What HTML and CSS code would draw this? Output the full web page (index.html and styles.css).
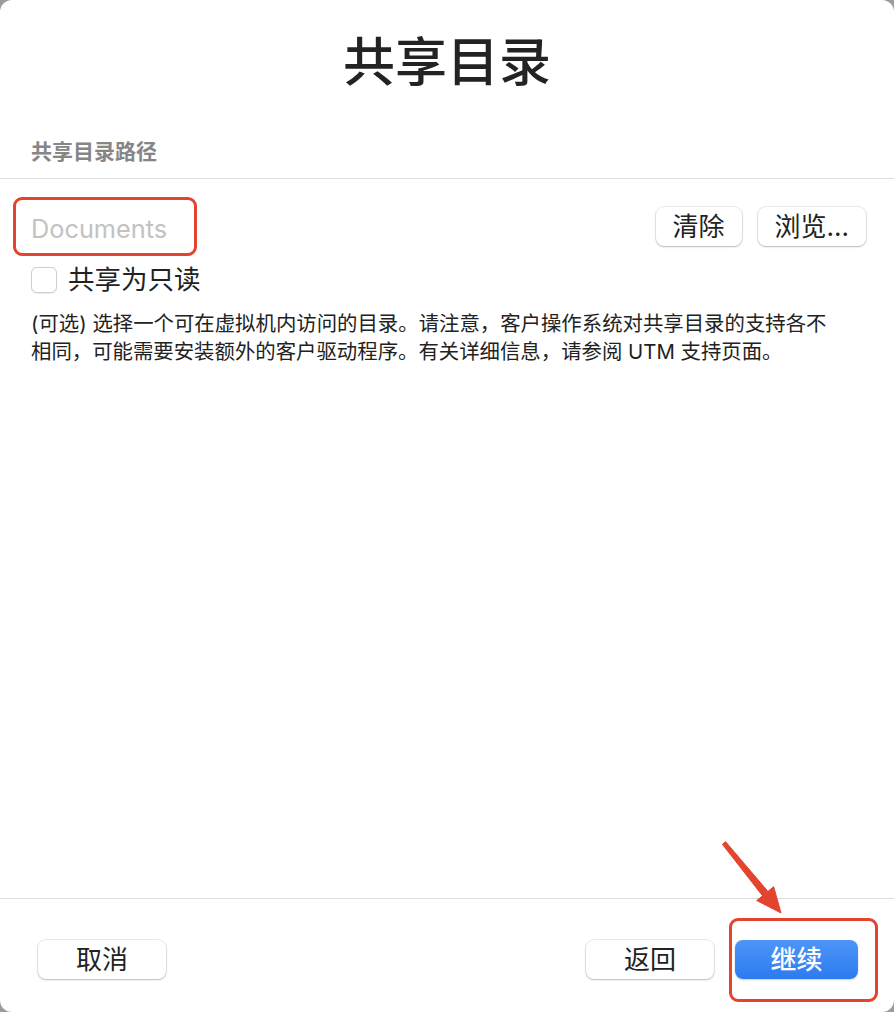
FILE: index.html
```html
<!DOCTYPE html>
<html lang="zh-CN">
<head>
  <meta charset="UTF-8">
  <title>共享目录</title>
  <link rel="stylesheet" href="styles.css">
</head>
<body>

  <div class="window">
    <!-- Header -->
    <h1 class="title">共享目录</h1>

    <div class="section-head">共享目录路径</div>

    <!-- Content -->
    <div class="content">
      <div class="path-row">
        <div class="path-field">
          <span class="placeholder">Documents</span>
          <span class="mark mark-field"></span>
        </div>
        <div class="path-actions">
          <button class="btn">清除</button>
          <button class="btn">浏览...</button>
        </div>
      </div>

      <label class="check-row">
        <span class="checkbox"></span>
        <span>共享为只读</span>
      </label>

      <p class="desc">(可选) 选择一个可在虚拟机内访问的目录。请注意，客户操作系统对共享目录的支持各不<br>相同，可能需要安装额外的客户驱动程序。有关详细信息，请参阅 UTM 支持页面。</p>
    </div>

    <!-- Footer -->
    <div class="footer">
      <button class="btn btn-wide">取消</button>
      <div class="footer-right">
        <button class="btn btn-wide">返回</button>
        <div class="primary-wrap">
          <button class="btn btn-primary">继续</button>
          <span class="mark mark-primary"></span>
        </div>
      </div>
    </div>

    <!-- Annotation arrow -->
    <svg class="arrow" width="100" height="100" viewBox="0 0 100 100">
      <polygon points="25.6,11.7 67.9,61.4 73.7,56.7 81,83 56.7,70.5 62.5,65.8 22.4,14.3" fill="#e4432d" stroke="#e4432d" stroke-width="1" stroke-linejoin="round"/>
    </svg>
  </div>

</body>
</html>
```

FILE: styles.css
```css
body {
  margin: 0;
  background: #9c9c9c;
  font-family: Inter, "Noto Sans CJK SC", sans-serif;
  color: #222;
}

/* Window */
.window {
  position: relative;
  width: 894px;
  height: 1012px;
  background: #fff;
  border-radius: 12px;
  display: flex;
  flex-direction: column;
  overflow: hidden;
}

.title {
  margin: 0;
  padding-top: 28px;
  font-size: 52px;
  line-height: 70px;
  font-weight: 500;
  text-align: center;
  color: #232323;
}

.section-head {
  margin-top: 39px;
  padding: 0 31px 11px;
  font-size: 21px;
  line-height: 30px;
  font-weight: 600;
  color: #868686;
  border-bottom: 1px solid #dcdcdc;
}

/* Content */
.content {
  flex: 1;
  padding: 28px 28px 0 31px;
}

.path-row {
  display: flex;
  justify-content: space-between;
  align-items: center;
  height: 39px;
}

.path-field {
  position: relative;
  display: flex;
  align-items: center;
  height: 39px;
}

.placeholder {
  font-size: 25.3px;
  color: #c2c2c2;
  position: relative;
  top: 2px;
}

.path-actions {
  display: flex;
  gap: 16px;
}

.btn {
  height: 39px;
  padding: 0 17px;
  border: none;
  border-radius: 8px;
  background: #fff;
  font-family: Inter, "Noto Sans CJK SC", sans-serif;
  font-size: 26px;
  line-height: 39px;
  color: #222;
  box-shadow: 0 0 0 1px rgba(0, 0, 0, 0.07), 0 1px 2px rgba(0, 0, 0, 0.22);
  cursor: pointer;
}

.btn-wide {
  width: 128px;
}

.btn-primary {
  width: 123px;
  color: #fff;
  font-weight: 500;
  background: linear-gradient(#4d96f7, #2c7bf1);
  box-shadow: 0 1px 2px rgba(0, 0, 0, 0.2);
}

/* Red highlight marks */
.mark {
  position: absolute;
  border: 3px solid #e4432d;
  border-radius: 9px;
  pointer-events: none;
}

.mark-field {
  left: -18px;
  top: -10px;
  width: 178px;
  height: 53px;
}

.mark-primary {
  left: -6px;
  top: -22px;
  width: 143px;
  height: 78px;
}

.check-row {
  display: flex;
  align-items: center;
  gap: 11px;
  margin-top: 20px;
  font-size: 26.5px;
  line-height: 27px;
}

.checkbox {
  width: 24px;
  height: 24px;
  border: 1px solid #cfcfcf;
  border-radius: 6px;
  background: #fff;
  box-shadow: 0 0.5px 1px rgba(0, 0, 0, 0.08);
}

.desc {
  margin: 17px 0 0;
  font-size: 20.4px;
  line-height: 28px;
  color: #222;
}

/* Footer */
.footer {
  display: flex;
  justify-content: space-between;
  align-items: flex-start;
  height: 114px;
  padding: 41px 36px 0 38px;
  box-sizing: border-box;
  border-top: 1px solid #dcdcdc;
}

.footer-right {
  display: flex;
  gap: 21px;
}

.primary-wrap {
  position: relative;
}

.arrow {
  position: absolute;
  left: 700px;
  top: 830px;
}
```
